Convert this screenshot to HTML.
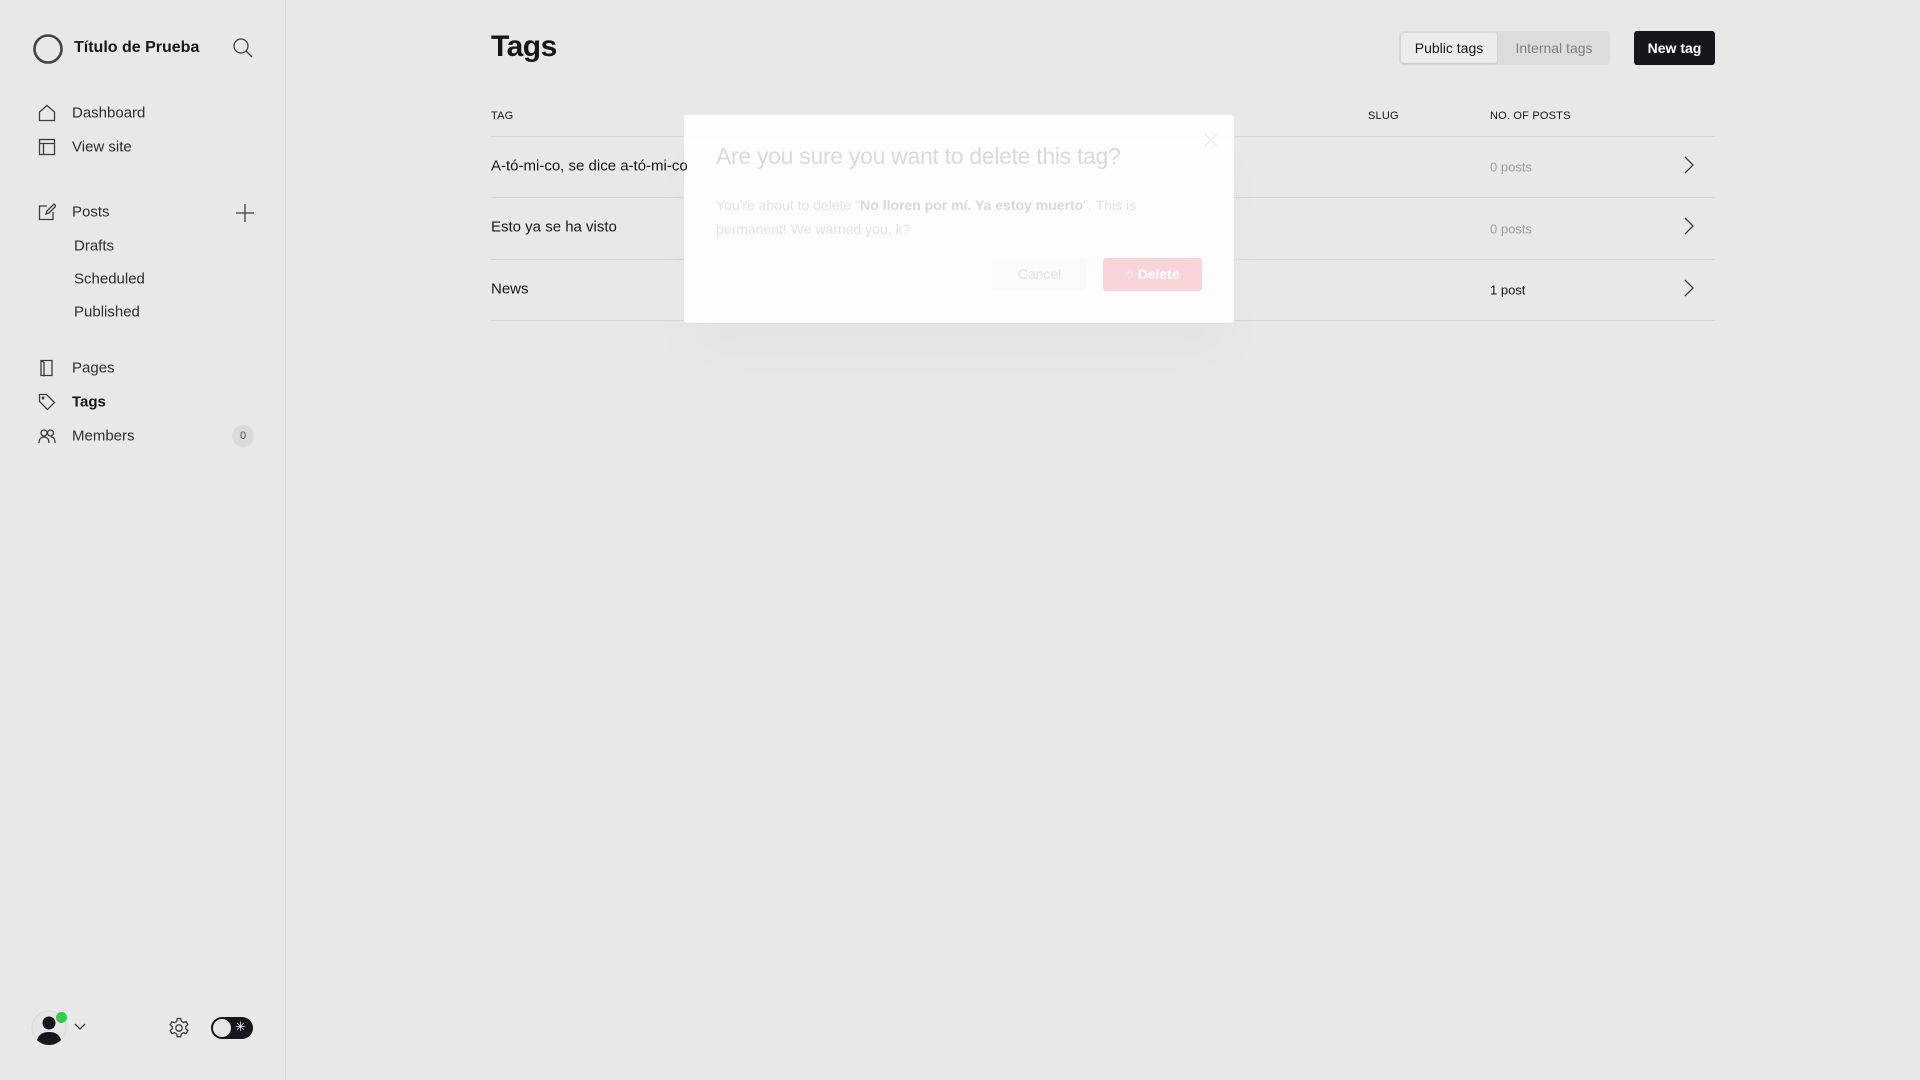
<!DOCTYPE html>
<html><head><meta charset="utf-8"><style>
*{box-sizing:border-box;margin:0;padding:0}
body{width:1920px;height:1080px;background:#e8e8e8;font-family:"Liberation Sans",sans-serif;color:#15171a;position:relative;overflow:hidden}
.sb{position:absolute;left:0;top:0;width:286px;height:1080px;border-right:1px solid #dcdcdc}
.a{position:absolute}
.nav{position:absolute;left:72px;font-size:15px;color:#2b2e33;transform:translateY(-50%)}
.ic{position:absolute;stroke:#3a3d42;fill:none;stroke-width:1.3}
.h{position:absolute;font-size:11px;color:#15171a;letter-spacing:.2px}
.line{position:absolute;left:491px;width:1224px;height:1px;background:#d6d6d6}
.cell{position:absolute;font-size:15px;transform:translateY(-50%);z-index:5}
.cnt{position:absolute;left:1490px;font-size:13px;color:#9a9ca0;transform:translateY(-50%)}
</style></head><body>
<div class="sb">
<svg class="a" style="left:32px;top:33px" width="32" height="32"><circle cx="16" cy="16" r="13.5" fill="none" stroke="#444" stroke-width="2.6"/></svg>
<div class="a" style="left:74px;top:39px;font-size:16px;font-weight:bold">Título de Prueba</div>
<svg class="ic" style="left:232px;top:37px" width="22" height="22" stroke-width="1.6"><circle cx="9" cy="9" r="7"/><path d="M14 14l6 6"/></svg>
<svg class="ic" style="left:38px;top:104px" width="18" height="18"><path d="M1.5 8L9 1.5 16.5 8v8.5h-15z"/></svg>
<div class="nav" style="top:113px">Dashboard</div>
<svg class="ic" style="left:38px;top:138px" width="18" height="18"><rect x="1.5" y="1.5" width="15" height="15"/><path d="M1.5 5.5h15M5.5 5.5v11"/></svg>
<div class="nav" style="top:147px">View site</div>
<svg class="ic" style="left:38px;top:203px" width="18" height="18"><path d="M9 3H1.5v13.5H15V9M8 11l1-3 7-7 2 2-7 7z"/></svg>
<div class="nav" style="top:212px">Posts</div>
<svg class="ic" style="left:235px;top:203px" width="20" height="20" stroke-width="1.5"><path d="M10 1v18M1 10h18"/></svg>
<div class="nav" style="top:246px;left:74px">Drafts</div>
<div class="nav" style="top:279px;left:74px">Scheduled</div>
<div class="nav" style="top:312px;left:74px">Published</div>
<svg class="ic" style="left:38px;top:359px" width="18" height="18"><path d="M3 1.5h11v15H3zM3 1.5l3 2v14"/></svg>
<div class="nav" style="top:368px">Pages</div>
<svg class="ic" style="left:38px;top:393px" width="18" height="18"><path d="M1.5 1.5h7l8 8-7 7-8-8z"/><circle cx="5" cy="5" r=".8"/></svg>
<div class="nav" style="top:402px;font-weight:bold;color:#15171a">Tags</div>
<svg class="ic" style="left:38px;top:427px" width="18" height="18"><circle cx="6" cy="6" r="3"/><circle cx="12.5" cy="6" r="3"/><path d="M1 16c0-4 2-6 5-6s5 2 5 6M13 10c3 0 4 2 4 6"/></svg>
<div class="nav" style="top:436px">Members</div>
<div class="a" style="left:232px;top:425px;width:22px;height:22px;border-radius:11px;background:#dadada;font-size:11px;text-align:center;line-height:22px;color:#555">0</div>
<svg class="a" style="left:31px;top:1010px" width="36" height="36"><circle cx="18" cy="18" r="17" fill="#e6e6e6" stroke="#d8d8d8"/><circle cx="18" cy="13" r="6.5" fill="#15171a"/><path d="M6 30c2-6 6-8 12-8s10 2 12 8c-3 3-7 5-12 5s-9-2-12-5z" fill="#15171a"/></svg>
<div class="a" style="left:56px;top:1012px;width:11px;height:11px;border-radius:6px;background:#30cf43"></div>
<svg class="ic" style="left:74px;top:1023px" width="12" height="8"><path d="M1 1l5 5 5-5"/></svg>
<svg class="ic" style="left:168px;top:1017px" width="22" height="22" stroke-width="1.4"><circle cx="11" cy="11" r="3.2"/><path d="M9.3 1.5h3.4l.6 2.7 2.2 1.3 2.6-.9 1.7 3-2 1.8v2.4l2 1.8-1.7 3-2.6-.9-2.2 1.3-.6 2.7H9.3l-.6-2.7-2.2-1.3-2.6.9-1.7-3 2-1.8V9.6l-2-1.8 1.7-3 2.6.9 2.2-1.3z"/></svg>
<div class="a" style="left:211px;top:1017px;width:42px;height:22px;border-radius:11px;background:#15171a"></div>
<div class="a" style="left:213px;top:1019px;width:18px;height:18px;border-radius:9px;background:#e8e8e8"></div>
<div class="a" style="left:235px;top:1019px;font-size:13px;color:#fff">✳</div>
</div>

<div class="a" style="left:491px;top:30px;font-size:30px;font-weight:bold;letter-spacing:-.5px">Tags</div>
<div class="a" style="left:1399px;top:31px;width:211px;height:34px;background:#dcdcdc;border-radius:4px"></div>
<div class="a" style="left:1401px;top:33px;width:96px;height:30px;background:#ececec;border-radius:3px;box-shadow:0 1px 2px rgba(0,0,0,.1);font-size:14px;text-align:center;line-height:30px">Public tags</div>
<div class="a" style="left:1500px;top:33px;width:108px;height:30px;font-size:14px;text-align:center;line-height:30px;color:#7c7f84">Internal tags</div>
<div class="a" style="left:1634px;top:31px;width:81px;height:34px;background:#15171a;border-radius:3px;color:#fff;font-size:14px;font-weight:bold;text-align:center;line-height:34px">New tag</div>

<div class="h" style="left:491px;top:110px">TAG</div>
<div class="h" style="left:1368px;top:110px">SLUG</div>
<div class="h" style="left:1490px;top:110px">NO. OF POSTS</div>
<div class="line" style="top:136px"></div>
<div class="line" style="top:197px"></div>
<div class="line" style="top:259px"></div>
<div class="line" style="top:320px"></div>
<div class="cell" style="left:491px;top:166px">A-tó-mi-co, se dice a-tó-mi-co</div>
<div class="cell" style="left:491px;top:227px">Esto ya se ha visto</div>
<div class="cell" style="left:491px;top:289px">News</div>
<div class="cnt" style="top:167px">0 posts</div>
<div class="cnt" style="top:229px">0 posts</div>
<div class="cnt" style="top:290px;color:#15171a">1 post</div>
<svg class="ic" style="left:1683px;top:155px" width="12" height="20" stroke="#777"><path d="M2 2l8 8-8 8"/></svg>
<svg class="ic" style="left:1683px;top:216px" width="12" height="20" stroke="#777"><path d="M2 2l8 8-8 8"/></svg>
<svg class="ic" style="left:1683px;top:278px" width="12" height="20" stroke="#777"><path d="M2 2l8 8-8 8"/></svg>

<div class="a" style="left:684px;top:115px;width:550px;height:208px;background:rgba(255,255,255,.9);border-radius:3px;box-shadow:0 40px 50px rgba(0,0,0,.02)">
<svg class="a" style="left:520px;top:18px" width="14" height="14" stroke="#eee" stroke-width="1.5"><path d="M1 1l12 12M13 1L1 13"/></svg>
<div class="a" style="left:32px;top:28px;font-size:23px;color:#dadada;white-space:nowrap;letter-spacing:-.3px">Are you sure you want to delete this tag?</div>
<div class="a" style="left:32px;top:78px;font-size:14px;line-height:24px;color:#e2e2e2;width:460px">You're about to delete "<b style="color:#d8d8d8">No lloren por mí. Ya estoy muerto</b>". This is permanent! We warned you, k?</div>
<div class="a" style="left:308px;top:143px;width:95px;height:33px;border-radius:3px;background:#fafafa;font-size:14px;color:#e2e2e2;text-align:center;line-height:33px">Cancel</div>
<div class="a" style="left:419px;top:143px;width:99px;height:33px;border-radius:3px;background:#f8d4d8;font-size:14px;font-weight:bold;color:#fff;text-align:center;line-height:33px">◌ Delete</div>
</div>
</body></html>
